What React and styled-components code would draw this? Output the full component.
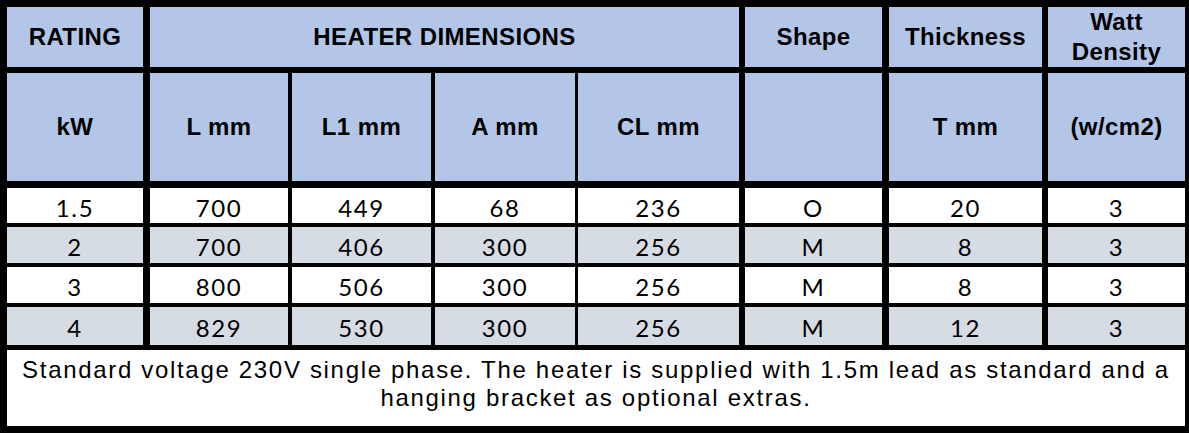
import React from "react";
import styled, { createGlobalStyle } from "styled-components";

const Global = createGlobalStyle`
  html, body { margin: 0; padding: 0; background: #ffffff; }
  #root { width: 1189px; }
`;

const COLS = [143, 142, 143, 143, 167, 144, 159, 137];
const RIGHT = [7, 4, 4, 3, 6, 7, 6, 0];

const Table = styled.div`
  box-sizing: border-box;
  width: 1189px;
  height: 433px;
  background: #000000;
  padding: 7px 4px 7px 7px;
  display: grid;
  grid-template-columns: ${COLS.map((c) => `${c}px`).join(" ")};
  grid-template-rows: 66px 115px 39px 40px 40px 43px 76px;
`;

const Cell = styled.div`
  box-sizing: border-box;
  margin-right: ${(p) => p.$right || 0}px;
  margin-bottom: ${(p) => p.$bottom || 0}px;
  grid-column: ${(p) => p.$span || "auto"};
  background: ${(p) => p.$bg};
  display: flex;
  align-items: center;
  justify-content: center;
  text-align: center;
  color: #000000;
  overflow: hidden;
`;

const HeadCell = styled(Cell)`
  font-family: "Liberation Sans", Arial, sans-serif;
  font-weight: 700;
  font-size: 24px;
  letter-spacing: 0.4px;
  line-height: 30px;
  white-space: pre-line;
`;

const DataCell = styled(Cell)`
  font-family: Lato, "Open Sans", sans-serif;
  font-weight: 400;
  font-size: 24px;
  letter-spacing: 1.6px;
  line-height: 1;
  padding-top: 4px;
`;

const Footer = styled(Cell)`
  font-family: "Liberation Sans", Arial, sans-serif;
  font-size: 24px;
  letter-spacing: 1.68px;
  line-height: 28px;
  padding-bottom: 8px;
  white-space: nowrap;
`;

const FooterText = styled.div`
  display: flex;
  flex-direction: column;
  align-items: center;
`;

const HEADER_BG = "#B4C6E7";
const GRAY_BG = "#D6DCE4";

const header2 = ["kW", "L mm", "L1 mm", "A mm", "CL mm", "", "T mm", "(w/cm2)"];
const rows = [
  ["1.5", "700", "449", "68", "236", "O", "20", "3"],
  ["2", "700", "406", "300", "256", "M", "8", "3"],
  ["3", "800", "506", "300", "256", "M", "8", "3"],
  ["4", "829", "530", "300", "256", "M", "12", "3"],
];
const rowBottoms = [4, 4, 4, 5];

export default function App() {
  return (
    <>
      <Global />
      <Table>
        <HeadCell $bg={HEADER_BG} $right={RIGHT[0]} $bottom={6}>RATING</HeadCell>
        <HeadCell $bg={HEADER_BG} $right={RIGHT[4]} $bottom={6} $span="span 4">
          HEATER DIMENSIONS
        </HeadCell>
        <HeadCell $bg={HEADER_BG} $right={RIGHT[5]} $bottom={6}>Shape</HeadCell>
        <HeadCell $bg={HEADER_BG} $right={RIGHT[6]} $bottom={6}>Thickness</HeadCell>
        <HeadCell $bg={HEADER_BG} $right={RIGHT[7]} $bottom={6}>{"Watt\nDensity"}</HeadCell>

        {header2.map((t, i) => (
          <HeadCell key={`h2-${i}`} $bg={HEADER_BG} $right={RIGHT[i]} $bottom={7}>
            {t}
          </HeadCell>
        ))}

        {rows.map((r, ri) =>
          r.map((v, ci) => (
            <DataCell
              key={`r${ri}-${ci}`}
              $bg={ri % 2 === 1 ? GRAY_BG : "#FFFFFF"}
              $right={RIGHT[ci]}
              $bottom={rowBottoms[ri]}
            >
              {v}
            </DataCell>
          ))
        )}

        <Footer $bg="#FFFFFF" $span="1 / -1">
          <FooterText>
            <span>
              Standard voltage 230V single phase. The heater is supplied with 1.5m lead as standard and a
            </span>
            <span>hanging bracket as optional extras.</span>
          </FooterText>
        </Footer>
      </Table>
    </>
  );
}
